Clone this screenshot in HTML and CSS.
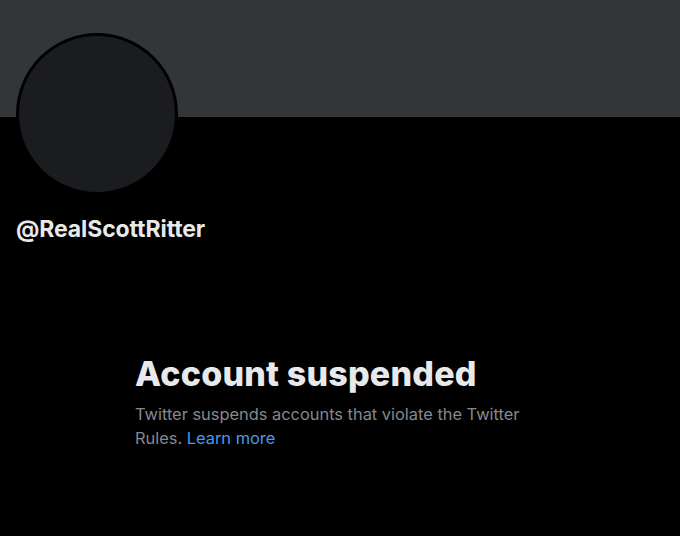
FILE: index.html
```html
<!DOCTYPE html>
<html>
<head>
<meta charset="utf-8">
<link rel="stylesheet" href="styles.css">
</head>
<body>
<div class="banner"></div>
<div class="profile">
  <div class="avatar"></div>
  <div class="handle">@RealScottRitter</div>
</div>
<div class="notice">
  <h1 class="title">Account suspended</h1>
  <p class="desc">Twitter suspends accounts that violate the Twitter Rules. <a class="link" href="#">Learn more</a></p>
</div>
</body>
</html>
```
FILE: styles.css
```css
html, body {
  margin: 0;
  padding: 0;
  background: #000;
  width: 680px;
  height: 536px;
  overflow: hidden;
  font-family: Inter, "Liberation Sans", sans-serif;
}
.banner {
  height: 117px;
  background: #333639;
}
.profile {
  padding: 0 16px;
}
.avatar {
  width: 156px;
  height: 156px;
  margin-top: -84px;
  border-radius: 50%;
  background: #1b1c20;
  border: 3px solid #000;
}
.handle {
  margin-top: 19px;
  color: #e7e9ea;
  font-size: 23px;
  font-weight: 700;
  line-height: 30px;
  letter-spacing: -0.1px;
}
.notice {
  padding: 0 0 0 135px;
  margin-top: 110px;
  width: 400px;
}
.title {
  margin: 0;
  color: #e7e9ea;
  font-size: 34px;
  font-weight: 800;
  line-height: 40px;
  letter-spacing: 0.2px;
}
.desc {
  margin: 8px 0 0;
  color: #85898e;
  font-size: 16.4px;
  line-height: 24px;
}
.link {
  color: #4b9be8;
  text-decoration: none;
}
```
